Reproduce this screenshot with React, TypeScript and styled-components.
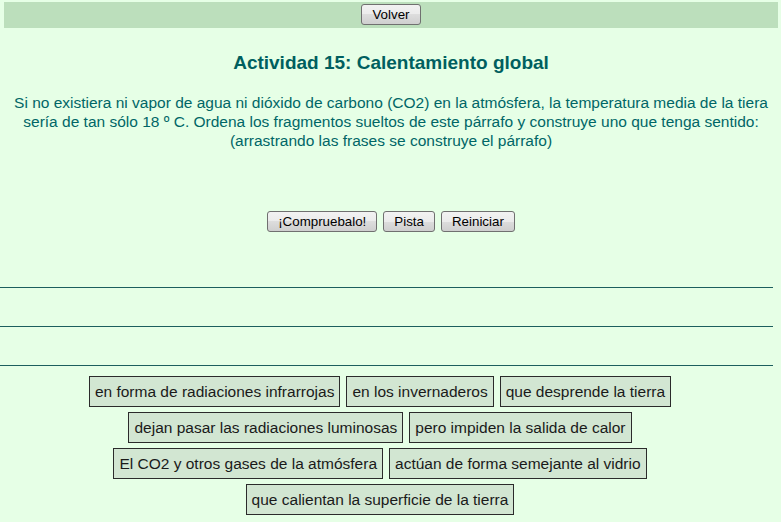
import styled, { createGlobalStyle } from "styled-components";

const GlobalStyle = createGlobalStyle`
  html, body {
    margin: 0;
    padding: 0;
    background: #e6ffe6;
  }
  body {
    font-family: "Liberation Sans", Arial, sans-serif;
  }
`;

const Page = styled.div`
  width: 781px;
  min-height: 522px;
  padding-top: 2px;
  box-sizing: border-box;
`;

const TopBar = styled.div`
  margin-left: 4px;
  width: 774px;
  height: 26px;
  background: #bcdfbc;
  display: flex;
  align-items: flex-start;
  justify-content: center;
  padding-top: 2px;
  box-sizing: border-box;
`;

const Upper = styled.div`
  margin-left: 4px;
  width: 774px;
  display: flex;
  flex-direction: column;
  align-items: center;
`;

const Title = styled.h1`
  margin: 24px 0 0;
  font-size: 19px;
  line-height: 22px;
  font-weight: 700;
  color: #005f5f;
`;

const Intro = styled.p`
  margin: 19px 0 0;
  font-size: 15.5px;
  line-height: 19px;
  text-align: center;
  white-space: nowrap;
  color: #006666;
`;

const Actions = styled.div`
  margin-top: 61px;
  display: flex;
  gap: 6px;
`;

const Button = styled.button`
  height: 21px;
  padding: 0 10px;
  font-family: "Liberation Sans", Arial, sans-serif;
  font-size: 13.33px;
  color: #000;
  border: 1px solid #707070;
  border-radius: 3px;
  background: linear-gradient(#f2f2f2, #ebebeb 50%, #dddddd 50%, #cfcfcf);
  cursor: pointer;
`;

const Drops = styled.div`
  margin-top: 55px;
  width: 773px;
  border-top: 1px solid #1d5e5e;
`;

const DropRow = styled.div`
  height: 38px;
  border-bottom: 1px solid #1d5e5e;
`;

const Pieces = styled.div`
  width: 760px;
  margin-top: 10px;
  display: flex;
  flex-direction: column;
  align-items: center;
  gap: 5px;
`;

const PieceRow = styled.div`
  display: flex;
  gap: 6px;
`;

const Piece = styled.span`
  display: block;
  padding: 6px 5px;
  font-size: 15.5px;
  line-height: 17px;
  color: #1a1a1a;
  background: #d2e6d2;
  border: 1px solid #2b2b2b;
  white-space: nowrap;
  cursor: move;
`;

const rows = [
  ["en forma de radiaciones infrarrojas", "en los invernaderos", "que desprende la tierra"],
  ["dejan pasar las radiaciones luminosas", "pero impiden la salida de calor"],
  ["El CO2 y otros gases de la atmósfera", "actúan de forma semejante al vidrio"],
  ["que calientan la superficie de la tierra"],
];

export default function App() {
  return (
    <>
      <GlobalStyle />
      <Page>
        <TopBar>
          <Button>Volver</Button>
        </TopBar>
        <Upper>
          <Title>Actividad 15: Calentamiento global</Title>
          <Intro>
            Si no existiera ni vapor de agua ni dióxido de carbono (CO2) en la atmósfera, la
            temperatura media de la tiera
            <br />
            sería de tan sólo 18 º C. Ordena los fragmentos sueltos de este párrafo y construye uno
            que tenga sentido:
            <br />
            (arrastrando las frases se construye el párrafo)
          </Intro>
          <Actions>
            <Button>¡Compruebalo!</Button>
            <Button>Pista</Button>
            <Button>Reiniciar</Button>
          </Actions>
        </Upper>
        <Drops>
          <DropRow />
          <DropRow />
        </Drops>
        <Pieces>
          {rows.map((row, i) => (
            <PieceRow key={i}>
              {row.map((text) => (
                <Piece key={text}>{text}</Piece>
              ))}
            </PieceRow>
          ))}
        </Pieces>
      </Page>
    </>
  );
}
